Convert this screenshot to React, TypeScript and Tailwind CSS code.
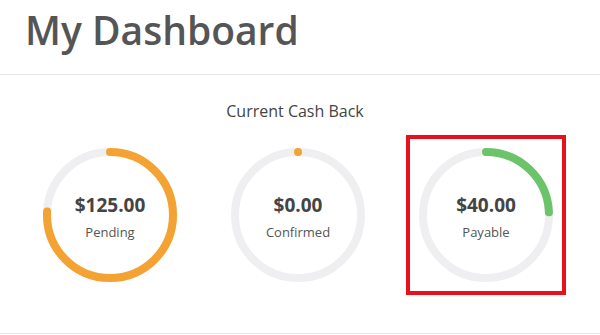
import React from 'react';

interface RingProps {
  amount: string;
  label: string;
  value: number;
  color: string;
  highlight?: boolean;
}

const TOTAL = 165;
const R = 63;
const C = 2 * Math.PI * R;

const Ring: React.FC<RingProps> = ({ amount, label, value, color, highlight }) => {
  const len = (value / TOTAL) * C;
  return (
    <div className="flex justify-center">
      <div className={`p-[9px] border-4 ${highlight ? 'border-[#e8101a]' : 'border-transparent'}`}>
        <div className="relative w-[134px] h-[134px]">
          <svg width="134" height="134" viewBox="0 0 134 134" className="absolute inset-0">
            <circle cx="67" cy="67" r={R} fill="none" stroke="#efeef1" strokeWidth="8" />
            <circle
              cx="67"
              cy="67"
              r={R}
              fill="none"
              stroke={color}
              strokeWidth="8"
              strokeLinecap="round"
              strokeDasharray={`${len} ${C}`}
              transform="rotate(-90 67 67)"
            />
          </svg>
          <div className="absolute inset-0 flex flex-col items-center justify-center">
            <span className="text-[19px] font-bold text-[#444] leading-[26px] mt-[2px]">{amount}</span>
            <span className="text-[13px] text-[#555] leading-[18px] mt-[5px]">{label}</span>
          </div>
        </div>
      </div>
    </div>
  );
};

const App: React.FC = () => {
  return (
    <div className="w-[600px] h-[335px] bg-white overflow-hidden" style={{ fontFamily: '"Open Sans", sans-serif' }}>
      <div className="h-[75px] border-b border-[#e6e6e6] pl-[25px]">
        <h1 className="text-[39px] font-semibold text-[#555] leading-[60px]">My Dashboard</h1>
      </div>
      <p className="mt-[25px] text-center text-[16px] leading-[22px] text-[#444] pr-[10px]">Current Cash Back</p>
      <div className="ml-[16px] w-[564px] grid grid-cols-3 mt-[13px]">
        <Ring amount="$125.00" label="Pending" value={125} color="#f4a332" />
        <Ring amount="$0.00" label="Confirmed" value={0} color="#f4a332" />
        <Ring amount="$40.00" label="Payable" value={40} color="#6cc46a" highlight />
      </div>
      <div className="mt-[38px] border-t border-[#e6e6e6]" />
    </div>
  );
};

export default App;
